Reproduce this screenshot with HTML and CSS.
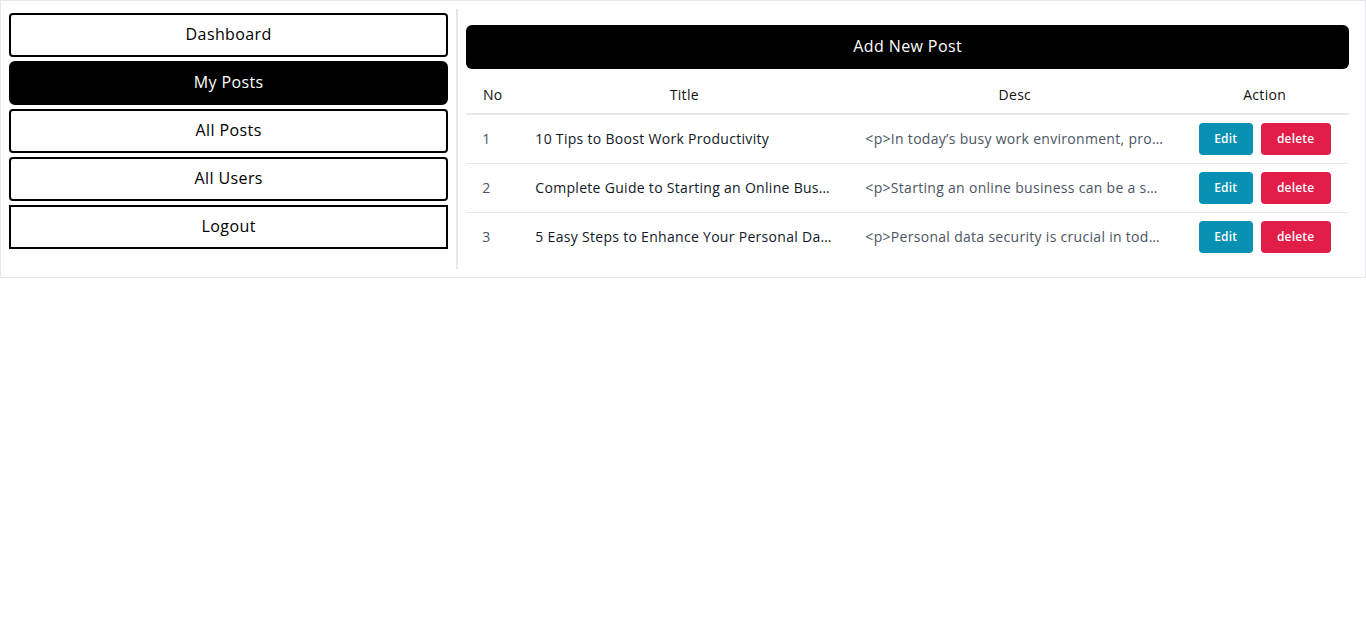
FILE: index.html
```html
<!DOCTYPE html>
<html lang="en">
<head>
<meta charset="utf-8">
<title>My Posts</title>
<link rel="stylesheet" href="styles.css">
</head>
<body>
<div class="wrap">
  <aside class="sidebar">
    <a class="nav-btn" href="#">Dashboard</a>
    <a class="nav-btn active" href="#">My Posts</a>
    <a class="nav-btn" href="#">All Posts</a>
    <a class="nav-btn" href="#">All Users</a>
    <button class="nav-btn logout" type="button">Logout</button>
  </aside>
  <main class="content">
    <button class="add-btn" type="button">Add New Post</button>
    <table class="posts">
      <colgroup>
        <col class="c-no">
        <col class="c-title">
        <col class="c-desc">
        <col class="c-action">
      </colgroup>
      <thead>
        <tr><th>No</th><th>Title</th><th>Desc</th><th>Action</th></tr>
      </thead>
      <tbody>
        <tr>
          <td class="num">1</td>
          <td class="title">10 Tips to Boost Work Productivity</td>
          <td class="desc">&lt;p&gt;In today’s busy work environment, productivity is key to success and growth.</td>
          <td><div class="actions"><button class="btn edit" type="button">Edit</button><button class="btn del" type="button">delete</button></div></td>
        </tr>
        <tr>
          <td class="num">2</td>
          <td class="title">Complete Guide to Starting an Online Business</td>
          <td class="desc">&lt;p&gt;Starting an online business can be a smart way to earn income.</td>
          <td><div class="actions"><button class="btn edit" type="button">Edit</button><button class="btn del" type="button">delete</button></div></td>
        </tr>
        <tr>
          <td class="num">3</td>
          <td class="title">5 Easy Steps to Enhance Your Personal Data Security</td>
          <td class="desc">&lt;p&gt;Personal data security is crucial in today’s digital world.</td>
          <td><div class="actions"><button class="btn edit" type="button">Edit</button><button class="btn del" type="button">delete</button></div></td>
        </tr>
      </tbody>
    </table>
  </main>
</div>
</body>
</html>
```
FILE: styles.css
```css
* { box-sizing: border-box; }
html, body { margin: 0; padding: 0; background: #fff; }
body {
  font-family: "Open Sans", "Liberation Sans", sans-serif;
  color: #000;
  letter-spacing: 0.3px;
}
.wrap {
  display: flex;
  border: 1px solid #e5e7eb;
  padding: 8px;
}
.sidebar {
  width: 33.3333%;
  display: flex;
  flex-direction: column;
  gap: 4px;
  padding: 4px 8px 0 0;
  border-right: 2px solid #e5e7eb;
}
.nav-btn {
  display: block;
  width: 100%;
  height: 44px;
  border: 2px solid #000;
  border-radius: 4px;
  background: #fff;
  color: #000;
  font: inherit;
  font-size: 16px;
  line-height: 24px;
  letter-spacing: 0.4px;
  text-align: center;
  text-decoration: none;
  padding: 7px 0 9px;
  cursor: pointer;
}
.nav-btn.active {
  background: #000;
  color: #fff;
  border-radius: 6px;
  font-weight: 500;
}
.nav-btn.logout { border-radius: 0; }
.content {
  width: 66.6667%;
  padding: 16px 8px 8px 8px;
}
.add-btn {
  display: block;
  width: 100%;
  height: 44px;
  border: 0;
  border-radius: 6px;
  background: #000;
  color: #fff;
  font: inherit;
  font-size: 16px;
  font-weight: 500;
  letter-spacing: 0.4px;
  padding: 0 0 2px;
  cursor: pointer;
}
.posts {
  width: 100%;
  margin-top: 8px;
  border-collapse: collapse;
  table-layout: fixed;
  font-size: 14px;
  line-height: 20px;
}
.c-no { width: 53px; }
.c-title { width: 330px; }
.c-desc { width: 331px; }
.posts th {
  padding: 8px 16px;
  font-weight: 500;
  text-align: center;
  color: #111;
  border-bottom: 2px solid #e5e7eb;
}
.posts td {
  padding: 8px 16px;
  vertical-align: middle;
}
.posts td.title,
.posts td.desc {
  white-space: nowrap;
  overflow: hidden;
  text-overflow: ellipsis;
}
.posts tbody tr { border-bottom: 1px solid #e5e7eb; }
.posts tbody tr:last-child { border-bottom: 0; }
.num { color: #4b5563; }
.title { color: #111827; font-weight: 500; }
.desc { color: #4b5563; }
.actions {
  display: flex;
  justify-content: center;
  gap: 8px;
}
.btn {
  height: 32px;
  padding: 0 14px;
  border: 0;
  border-radius: 4px;
  color: #fff;
  font: inherit;
  font-size: 12px;
  font-weight: 600;
  letter-spacing: 0.2px;
  cursor: pointer;
}
.btn.edit { background: #0891b2; min-width: 54px; }
.btn.del { background: #e11d48; min-width: 70px; }
```
